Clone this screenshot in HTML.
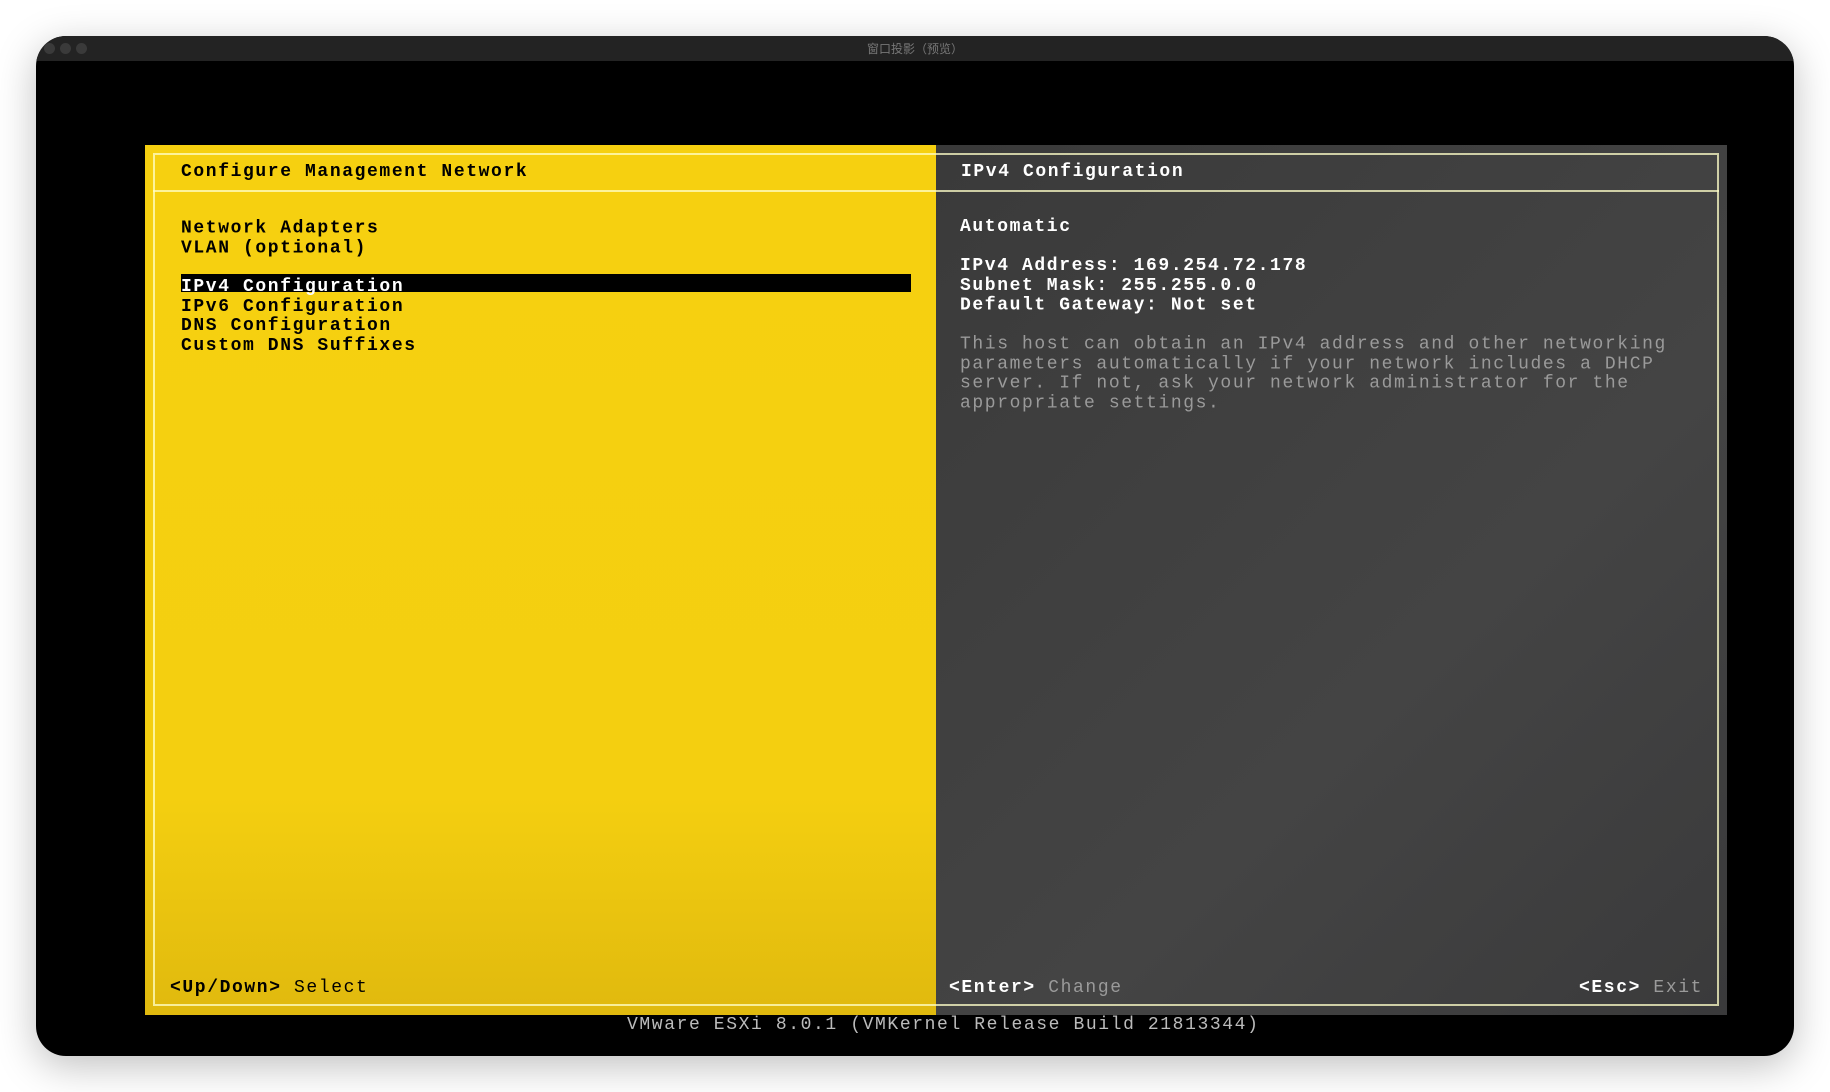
<!DOCTYPE html>
<html><head><meta charset="utf-8"><style>
*{margin:0;padding:0;box-sizing:border-box}
body{width:1830px;height:1092px;background:#fff;position:relative;overflow:hidden;font-family:"Liberation Mono",monospace}
.win{position:absolute;left:36px;top:36px;width:1758px;height:1020px;background:#000;border-radius:30px;overflow:hidden;box-shadow:0 10px 40px rgba(0,0,0,.25)}
.tb{position:absolute;left:0;top:0;width:100%;height:25px;background:#232323}
.tb span{position:absolute;left:0;width:100%;text-align:center;top:4px;color:#777;font:12px "Liberation Sans","Noto Sans CJK SC",sans-serif}
.dot{position:absolute;top:7px;width:11px;height:11px;border-radius:50%;background:#3a3a3a}
.y{position:absolute;left:145px;top:145px;width:791px;height:870px;background:linear-gradient(#f6d010 0%,#f4cf10 75%,#e0b90e 100%)}
.d{position:absolute;left:936px;top:145px;width:791px;height:870px;background:linear-gradient(135deg,#3a3a3a,#444 60%,#3a3a3b)}
.bd{position:absolute;left:153px;top:153px;width:1566px;height:853px;border:2px solid rgba(255,255,200,.75)}
.sep{position:absolute;left:153px;top:190px;width:1566px;height:2px;background:rgba(255,255,200,.75)}
.t{position:absolute;font-size:18px;font-weight:bold;letter-spacing:1.6px;line-height:18.67px;white-space:pre;color:#000;transform:scaleY(1.05)}
.w{color:#fff}.g{color:#9a9a9a;font-weight:normal}
.hl{position:absolute;left:181px;top:274px;width:730px;height:18px;background:#000}
</style></head><body>
<div class="win">
<div class="tb"><div class="dot" style="left:8px"></div><div class="dot" style="left:24px"></div><div class="dot" style="left:40px"></div><span>窗口投影（预览）</span></div>
</div>
<div class="y"></div><div class="d"></div>
<div class="bd"></div><div class="sep"></div>
<div class="hl"></div>
<div class="t" style="left:181px;top:163px">Configure Management Network</div>
<div class="t" style="left:181px;top:222px">Network Adapters
VLAN (optional)

<span class="w">IPv4 Configuration</span>
IPv6 Configuration
DNS Configuration
Custom DNS Suffixes</div>
<div class="t w" style="left:961px;top:163px">IPv4 Configuration</div>
<div class="t w" style="left:960px;top:222px">Automatic

IPv4 Address: 169.254.72.178
Subnet Mask: 255.255.0.0
Default Gateway: Not set

<span class="g">This host can obtain an IPv4 address and other networking
parameters automatically if your network includes a DHCP
server. If not, ask your network administrator for the
appropriate settings.</span></div>
<div class="t" style="left:170px;top:979px">&lt;Up/Down&gt; <span style="font-weight:normal">Select</span></div>
<div class="t w" style="left:949px;top:979px">&lt;Enter&gt; <span class="g">Change</span></div>
<div class="t w" style="left:1579px;top:979px">&lt;Esc&gt; <span class="g">Exit</span></div>
<div class="t g" style="left:627px;top:1016px;color:#bbb">VMware ESXi 8.0.1 (VMKernel Release Build 21813344)</div>
</body></html>
